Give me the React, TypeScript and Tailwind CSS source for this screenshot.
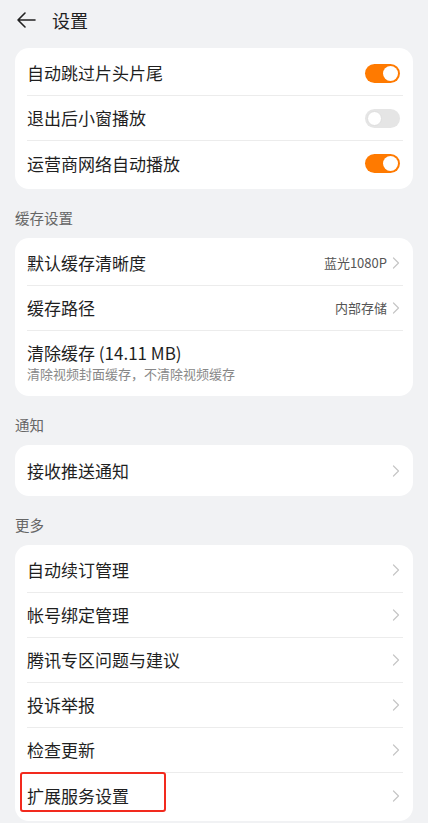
import { ReactNode } from 'react'

const font = { fontFamily: '"Noto Sans CJK SC", "Noto Sans", sans-serif' }

function Chevron() {
  return (
    <svg width="8" height="12" viewBox="0 0 8 12" className="ml-[5px] shrink-0">
      <path d="M1.5 1 L6.5 6 L1.5 11" fill="none" stroke="#c6c6c6" strokeWidth="1.2" strokeLinecap="round" strokeLinejoin="round" />
    </svg>
  )
}

function Toggle({ on }: { on: boolean }) {
  return on ? (
    <div className="flex h-[19px] w-[35px] items-center justify-end rounded-full bg-[#ff7a00] pr-[2px]">
      <div className="h-[15px] w-[15px] rounded-full bg-white" />
    </div>
  ) : (
    <div className="flex h-[19px] w-[35px] items-center justify-start rounded-full bg-[#e5e5e5] pl-[2px]">
      <div className="h-[15px] w-[15px] rounded-full border border-[#dedede] bg-white" />
    </div>
  )
}

function Row({ label, right, last, boxed }: { label: ReactNode; right?: ReactNode; last?: boolean; boxed?: boolean }) {
  return (
    <div className="relative">
      <div className={`flex items-center justify-between pl-[12px] pr-[13px] ${last ? 'h-[45px]' : 'h-[44px]'}`}>
        <span className="text-[17px] text-[#1f1f1f]">{label}</span>
        {right}
      </div>
      {!last && <div className="ml-[12px] mr-[10px] h-px bg-[#ececec]" />}
      {boxed && (
        <div className="absolute left-[5px] top-[-1px] h-[40px] w-[146px] rounded-[3px] border-2 border-[#f22a1e]" />
      )}
    </div>
  )
}

function Value({ text }: { text: string }) {
  return (
    <div className="flex items-center">
      <span className="text-[13px] text-[#555]">{text}</span>
      <Chevron />
    </div>
  )
}

function Card({ children }: { children: ReactNode }) {
  return <div className="mx-[15px] rounded-[14px] bg-white py-[3px]">{children}</div>
}

function Label({ text }: { text: string }) {
  return (
    <div className="mb-[10px] mt-[19px] flex h-[20px] items-center px-[15px] text-[14.5px] text-[#666]">{text}</div>
  )
}

export default function App() {
  const more = ['自动续订管理', '帐号绑定管理', '腾讯专区问题与建议', '投诉举报', '检查更新', '扩展服务设置']
  return (
    <div className="flex min-h-[823px] w-[430px] bg-white" style={font}>
      <div className="w-[428px] overflow-hidden bg-[#f1f2f4] pb-[10px]">
        {/* header */}
        <div className="mb-[8px] flex h-[40px] items-center pl-[16px]">
          <svg width="20" height="18" viewBox="0 0 20 18">
            <path d="M19 9 H2 M9 2 L2 9 L9 16" fill="none" stroke="#222" strokeWidth="1.6" strokeLinecap="round" strokeLinejoin="round" />
          </svg>
          <span className="ml-[16px] text-[18px] text-[#1f1f1f]">设置</span>
        </div>

        <Card>
          <Row label="自动跳过片头片尾" right={<Toggle on />} />
          <Row label="退出后小窗播放" right={<Toggle on={false} />} />
          <Row label="运营商网络自动播放" right={<Toggle on />} last />
        </Card>

        <Label text="缓存设置" />
        <Card>
          <Row label="默认缓存清晰度" right={<Value text="蓝光1080P" />} />
          <Row label="缓存路径" right={<Value text="内部存储" />} />
          <div className="flex h-[62px] flex-col justify-center px-[12px]">
            <span className="text-[17px] leading-[24px] text-[#1f1f1f]">清除缓存 (14.11 MB)</span>
            <span className="text-[13px] leading-[18px] text-[#888]">清除视频封面缓存，不清除视频缓存</span>
          </div>
        </Card>

        <Label text="通知" />
        <Card>
          <Row label="接收推送通知" right={<Chevron />} last />
        </Card>

        <Label text="更多" />
        <Card>
          {more.map((m, i) => (
            <Row key={m} label={m} right={<Chevron />} last={i === more.length - 1} boxed={i === more.length - 1} />
          ))}
        </Card>
      </div>
    </div>
  )
}
